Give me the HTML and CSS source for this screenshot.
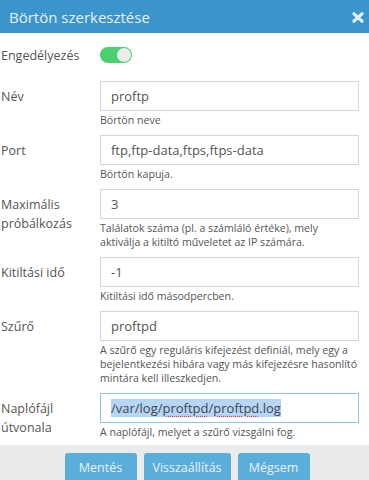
FILE: index.html
```html
<!DOCTYPE html>
<html lang="hu">
<head>
<meta charset="utf-8">
<link rel="stylesheet" href="styles.css">
</head>
<body>
<div class="dialog">
  <div class="header">
    <span class="title">Börtön szerkesztése</span>
    <svg class="close" width="12" height="11" viewBox="0 0 12 11"><path d="M2 1.8 L10 9.2 M10 1.8 L2 9.2" stroke="#e4eef6" stroke-width="3.2" stroke-linecap="round"/></svg>
  </div>
  <div class="content">
    <div class="row row-toggle">
      <div class="label">Engedélyezés</div>
      <div class="field"><span class="toggle"><span class="knob"></span></span></div>
    </div>
    <div class="row">
      <div class="label">Név</div>
      <div class="field"><div class="input">proftp</div><div class="help">Börtön neve</div></div>
    </div>
    <div class="row">
      <div class="label">Port</div>
      <div class="field"><div class="input">ftp,ftp-data,ftps,ftps-data</div><div class="help">Börtön kapuja.</div></div>
    </div>
    <div class="row">
      <div class="label">Maximális próbálkozás</div>
      <div class="field"><div class="input">3</div><div class="help">Találatok száma (pl. a számláló értéke), mely<br>aktiválja a kitiltó műveletet az IP számára.</div></div>
    </div>
    <div class="row">
      <div class="label">Kitiltási idő</div>
      <div class="field"><div class="input">-1</div><div class="help">Kitiltási idő másodpercben.</div></div>
    </div>
    <div class="row">
      <div class="label">Szűrő</div>
      <div class="field"><div class="input">proftpd</div><div class="help">A szűrő egy reguláris kifejezést definiál, mely egy a<br>bejelentkezési hibára vagy más kifejezésre hasonlító<br>mintára kell illeszkedjen.</div></div>
    </div>
    <div class="row row-last">
      <div class="label">Naplófájl útvonala</div>
      <div class="field"><div class="input focused"><span class="sel">/var/log/<span class="spell">proftpd</span>/<span class="spell">proftpd</span>.log</span></div><div class="help">A naplófájl, melyet a szűrő vizsgálni fog.</div></div>
    </div>
  </div>
  <div class="footer">
    <span class="btn btn-save">Mentés</span>
    <span class="btn btn-reset">Visszaállítás</span>
    <span class="btn btn-cancel">Mégsem</span>
  </div>
</div>
</body>
</html>
```
FILE: styles.css
```css
html, body {
  margin: 0;
  padding: 0;
  background: #ffffff;
  overflow: hidden;
}
body {
  font-family: "Open Sans", "Noto Sans", sans-serif;
  color: #555555;
  width: 369px;
  height: 480px;
}
.dialog {
  display: flex;
  flex-direction: column;
  height: 480px;
}
.header {
  height: 33px;
  background: #3c95ca;
  display: flex;
  align-items: center;
  justify-content: space-between;
  padding: 0 5px 0 9px;
  flex-shrink: 0;
}
.title {
  color: #e8f0f7;
  font-size: 15px;
}
.close {
  display: block;
  margin-top: 1px;
}
.content {
  padding: 12px 0 6px 0;
}
.row {
  display: grid;
  grid-template-columns: 100px 269px;
  margin-bottom: 8px;
}
.row-last {
  margin-bottom: 0;
}
.row-toggle {
  margin-bottom: 16px;
  height: 20px;
  align-items: center;
}
.label {
  font-size: 12.5px;
  line-height: 19px;
  padding: 6px 6px 0 1px;
  color: #555555;
}
.row-toggle .label {
  padding-top: 0;
}
.toggle {
  display: block;
  width: 32px;
  height: 16px;
  border-radius: 8px;
  background: #4ad06e;
  position: relative;
}
.knob {
  position: absolute;
  right: 1px;
  top: 1px;
  width: 14px;
  height: 14px;
  border-radius: 50%;
  background: #ececec;
}
.input {
  width: 237px;
  height: 28px;
  border: 1px solid #d6d6d6;
  padding: 0 10px;
  font-size: 13px;
  line-height: 28px;
  color: #555555;
  white-space: nowrap;
  overflow: hidden;
}
.input.focused {
  border-color: #8cc3e8;
}
.sel {
  background: #b5d6f7;
  color: #444444;
}
.spell {
  text-decoration: underline dotted #e04040;
  text-underline-offset: 3px;
}
.help {
  font-size: 10.6px;
  line-height: 14px;
  margin-top: 2px;
  color: #555555;
  white-space: nowrap;
}
.footer {
  flex: 1;
  background: #ebebeb;
  display: flex;
  justify-content: center;
  align-items: flex-start;
  gap: 7px;
  padding: 8px 0 0 5px;
}
.btn {
  display: block;
  height: 30px;
  line-height: 30px;
  background: #5badda;
  color: #eaf4fb;
  font-size: 12.5px;
  border-radius: 3px;
  text-align: center;
}
.btn-save { width: 72px; }
.btn-reset { width: 87px; }
.btn-cancel { width: 72px; }
```
